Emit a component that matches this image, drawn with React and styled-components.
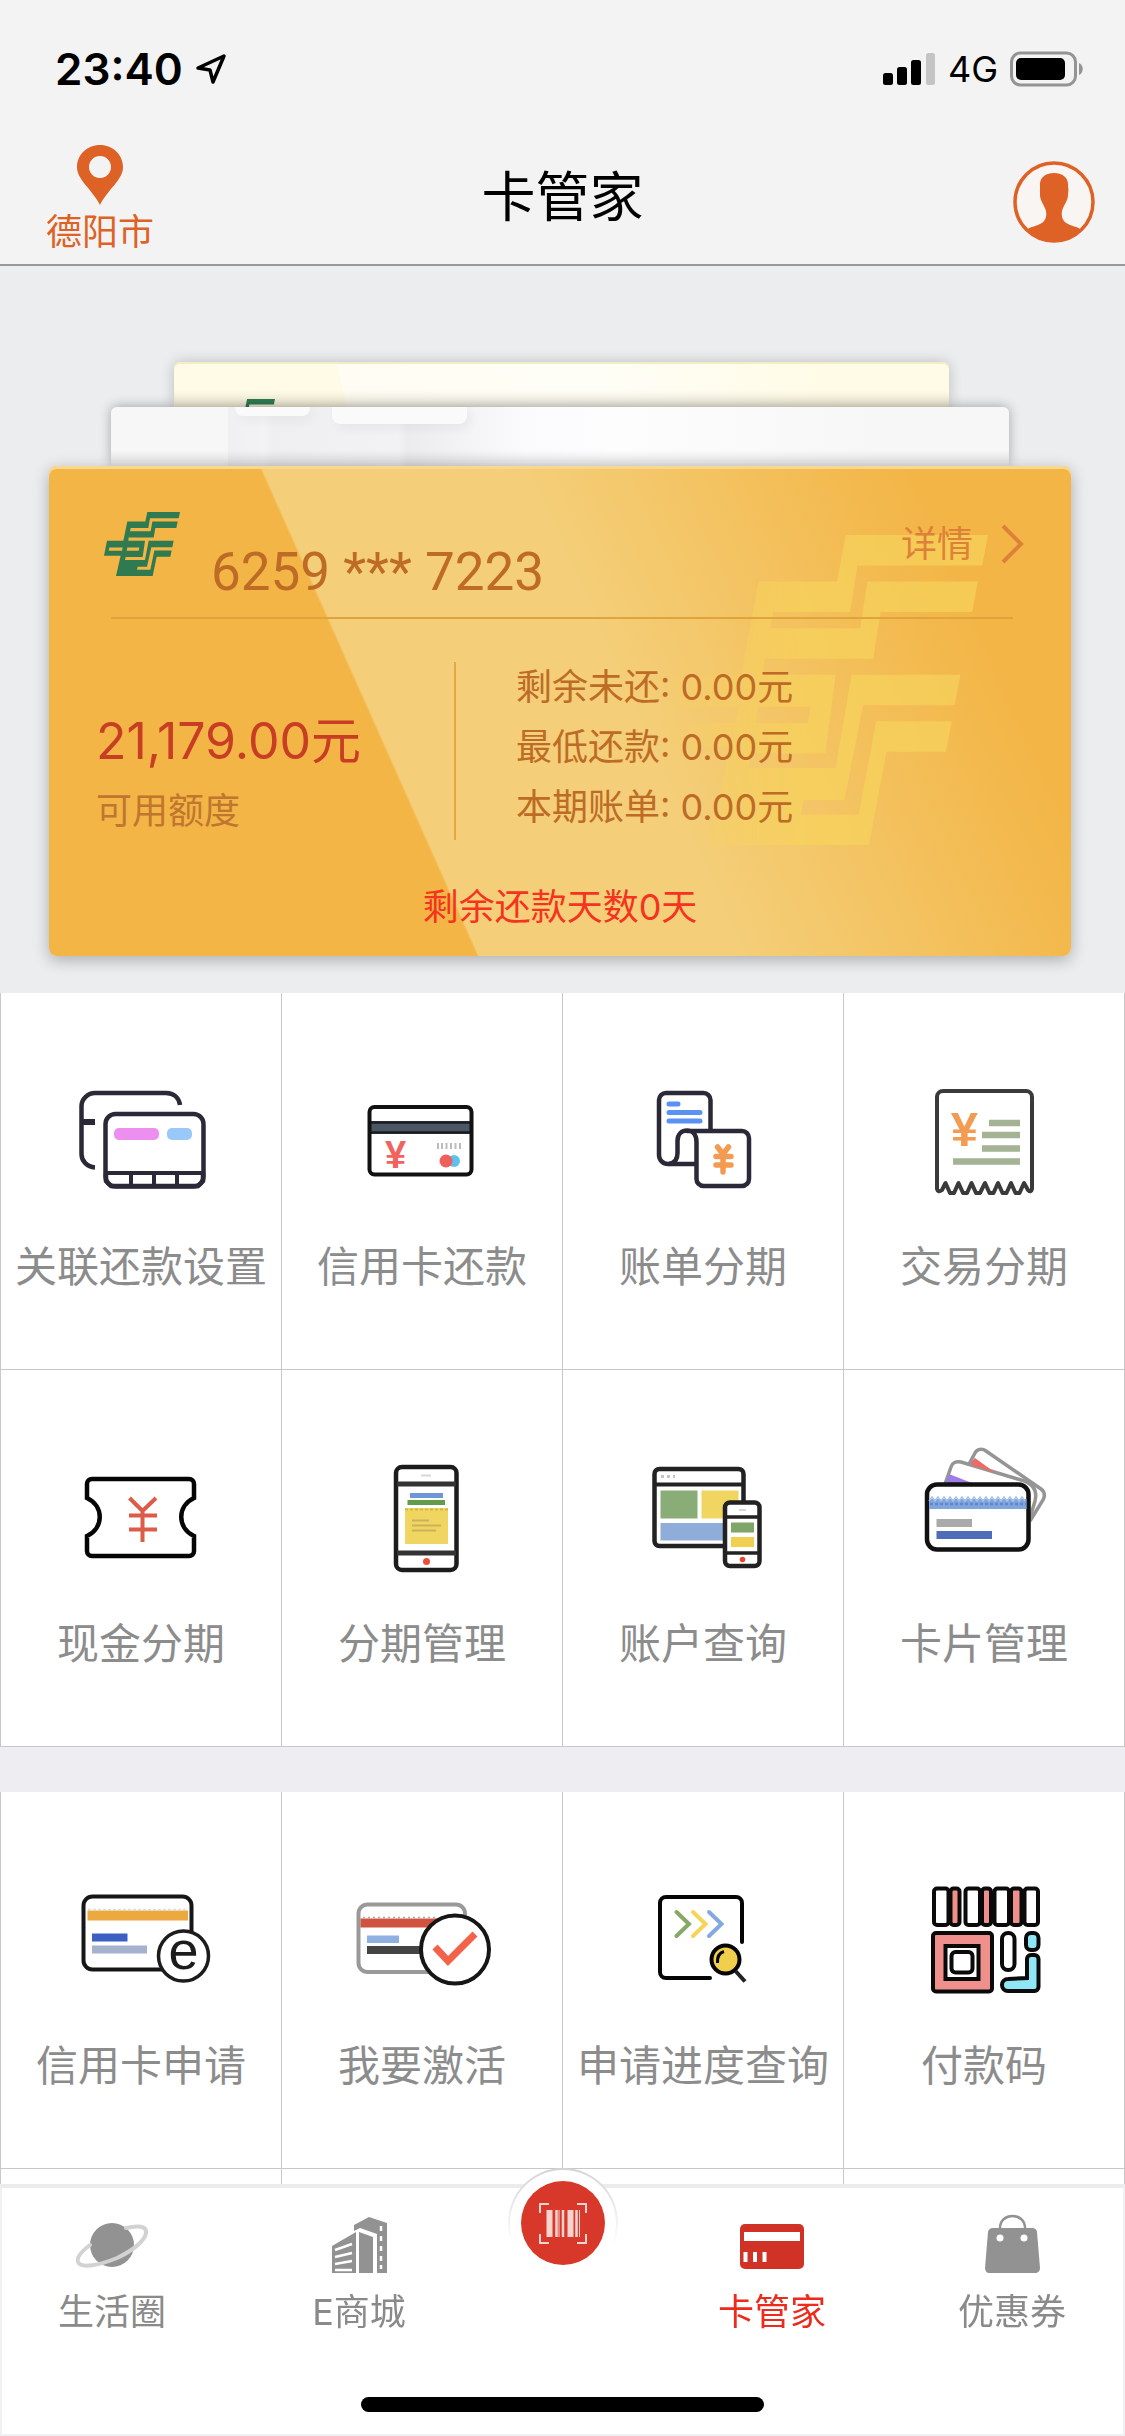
import React from 'react';
import styled, { createGlobalStyle } from 'styled-components';

const GlobalStyle = createGlobalStyle`
    * {
        box-sizing: border-box;
    }

    html, body {
        margin: 0;
        padding: 0;
    }

    body {
        font-family: "Inter", "Noto Sans CJK SC", sans-serif;
        background: #ecedef;
    }

    button {
        font-family: inherit;
        border: none;
        background: none;
        padding: 0;
        margin: 0;
        cursor: pointer;
    }

    svg {
        display: block;
    }
`;

const Screen = styled.div`
    display: flex;
    flex-direction: column;
    height: 100vh;
`;

/* ---------- status bar and header ---------- */

const StatusBar = styled.div`
    display: flex;
    justify-content: space-between;
    align-items: center;
    height: 132px;
    flex-shrink: 0;
    padding: 6px 41px 0 55px;
    background: #f3f3f3;
    color: #000;
`;

const StatusGroup = styled.div`
    display: flex;
    align-items: center;
    gap: 12px;
`;

const Time = styled.span`
    font-size: 44px;
    line-height: 52px;
    font-weight: 600;
`;

const Network = styled.span`
    font-size: 36px;
    line-height: 44px;
`;

const Header = styled.header`
    display: grid;
    grid-template-columns: 1fr auto 1fr;
    align-items: center;
    height: 134px;
    flex-shrink: 0;
    padding: 0 30px;
    background: #f3f3f3;
    border-bottom: 2px solid #989898;
`;

const CityButton = styled.button`
    display: flex;
    flex-direction: column;
    align-items: center;
    justify-self: start;
    gap: 7px;
    margin-left: 16px;
    color: #de6226;
    font-size: 36px;
    line-height: 40px;
`;

const Title = styled.h1`
    margin: 0;
    font-size: 54px;
    line-height: 64px;
    font-weight: 400;
    color: #000;
`;

const UserButton = styled.button`
    justify-self: end;
    margin-top: 8px;
`;

/* ---------- card stack ---------- */

const Main = styled.main`
    flex: 1;
    min-height: 0;
    overflow-y: auto;
    scrollbar-width: none;
`;

const CardStack = styled.section`
    display: flex;
    flex-direction: column;
    padding: 96px 54px 37px 49px;
    background: #ecedef;
`;

const BackCard = styled.div`
    height: 45px;
    margin: 0 122px 0 125px;
    padding: 37px 0 0 36px;
    overflow: hidden;
    border-radius: 6px 6px 0 0;
    background: linear-gradient(to top, rgba(120, 110, 80, 0.14), transparent 18px),
        linear-gradient(77deg, #fffbe6 22%, #fffdf3 22%, #fffef6 55%, #fffbe6 85%);
    box-shadow: 0 0 14px rgba(0, 0, 0, 0.2), inset 0 2px 0 #f3ecc4;
`;

const MiddleCard = styled.div`
    display: flex;
    align-items: flex-start;
    gap: 22px;
    height: 59px;
    margin: 0 62px;
    padding-left: 124px;
    border-radius: 6px 6px 0 0;
    background: linear-gradient(to top, rgba(0, 0, 0, 0.1), transparent 16px),
        linear-gradient(to right, #f7f7f8 13%, #eff0f1 13%, #f3f3f5 17%, #efeff1 18%, #f2f2f4 32%, #ececef 33%, #fbfbfd 46%, #fdfdfe 56%, #f7f7f8 85%);
    box-shadow: 0 -1px 12px rgba(0, 0, 0, 0.3);
`;

const Tab = styled.div`
    width: ${props => props.$width};
    height: ${props => props.$height};
    border-radius: 0 0 8px 8px;
    background: #fafafb;
    box-shadow: 4px 4px 12px rgba(0, 0, 0, 0.05);
`;

const CreditCard = styled.article`
    position: relative;
    min-height: 490px;
    border-radius: 8px;
    background: linear-gradient(66deg, #f3b546 34.5%, #f4ce78 34.7%, #f4ce78 56%, #f3b546 87%);
    box-shadow: 0 4px 16px rgba(0, 0, 0, 0.28), inset 0 3px 0 #f9d78f;
`;

const Watermark = styled.div`
    position: absolute;
    top: 69px;
    right: 83px;
    color: #f7d45c;
    opacity: 0.7;
    mask-image: linear-gradient(to right, transparent, #000 45%);
`;

const CardContent = styled.div`
    position: relative;
`;

const CardTop = styled.div`
    display: flex;
    align-items: flex-start;
    height: 151px;
    padding: 46px 46px 0 55px;
`;

const CardNumber = styled.span`
    margin: 30px 0 0 31px;
    font-family: "Roboto", sans-serif;
    font-size: 53px;
    line-height: 60px;
    color: #be6b26;
`;

const DetailButton = styled.button`
    display: flex;
    align-items: center;
    gap: 28px;
    margin: 12px 0 0 auto;
    font-size: 36px;
    line-height: 40px;
    color: #df8038;
`;

const Rule = styled.hr`
    height: 2px;
    margin: 0 58px 0 62px;
    border: none;
    background: #dfa43c;
`;

const CardBody = styled.div`
    display: flex;
    align-items: flex-start;
    height: 268px;
    color: #be6b26;
`;

const Limit = styled.div`
    display: flex;
    flex-direction: column;
    gap: 20px;
    width: 405px;
    padding: 92px 0 0 47px;
`;

const Amount = styled.strong`
    font-size: 50px;
    line-height: 60px;
    font-weight: 400;
    color: #c83e24;
`;

const LimitLabel = styled.span`
    font-size: 36px;
    line-height: 40px;
    color: #c0762f;
`;

const Divider = styled.div`
    width: 2px;
    height: 178px;
    margin-top: 43px;
    background: #e0a943;
`;

const BillList = styled.ul`
    margin: 38px 0 0 60px;
    padding: 0;
    list-style: none;
    font-size: 36px;
    line-height: 60px;
`;

const DueNotice = styled.p`
    margin: 0;
    font-size: 36px;
    line-height: 40px;
    text-align: center;
    color: #f5331f;
`;

/* ---------- service grid ---------- */

const ServiceSections = styled.div`
    display: flex;
    flex-direction: column;
    gap: 45px;
    background: #ededf2;
`;

const ServiceGrid = styled.section`
    display: grid;
    grid-template-columns: repeat(4, 1fr);
    grid-auto-rows: 377px;
    background: #fff;
    border-left: 1px solid #c8c8c8;
`;

const Tile = styled.button`
    display: flex;
    flex-direction: column;
    align-items: center;
    gap: 35px;
    padding-top: 74px;
    border-right: 1px solid #c8c8c8;
    border-bottom: 1px solid #c8c8c8;
    font-size: 42px;
    line-height: 50px;
    white-space: nowrap;
    color: #8c8c8c;
`;

/* ---------- bottom navigation ---------- */

const BottomNav = styled.nav`
    position: relative;
    flex-shrink: 0;
    background: #fff;
    border: 2px solid #f0f0f3;
    border-top: 4px solid #ebecee;
    padding-bottom: 22px;
`;

const NavItems = styled.div`
    display: grid;
    grid-template-columns: 220fr 274fr 134fr 284fr 196fr;
    align-items: start;
    height: 209px;
    padding-right: 13px;
`;

const NavItem = styled.button`
    display: flex;
    flex-direction: column;
    align-items: center;
    gap: 16px;
    padding-top: 26px;
    font-size: 36px;
    line-height: 44px;
    color: ${props => (props.$active ? '#ee2a1c' : '#8a8a8a')};
`;

const ScanButton = styled.button`
    justify-self: center;
    width: 110px;
    height: 110px;
    margin-top: -20px;
    border-radius: 50%;
    background: linear-gradient(#fff, #fff) padding-box, linear-gradient(#d4d4d6, #fff 70%) border-box;
    border: 2px solid transparent;
`;

const HomeIndicator = styled.div`
    width: 403px;
    height: 15px;
    margin: 0 auto;
    border-radius: 8px;
    background: #000;
`;

/* ---------- drawings ---------- */

const BankLogo = ({ width, height }) => (
    <svg width={width} height={height} viewBox="42 65 228 193" preserveAspectRatio="none" fill="currentColor" fillRule="evenodd">
        <path d="M172 65H270L266 84H180L175 113H122L120 123H182L187 94H263L259 113H196L191 142H116L115 152H165L158 201H107L105 210H165L176 152H251L247 171H184L171 230H143L141 239H181L193 181H245L241 200H200L188 258H78L92 197H42L51 152H100L112 94H166Z M58 172L56 182H96L98 172Z M112 172L110 182H146L148 172Z" />
    </svg>
);

const LogoColor = styled.span`
    color: #2f7a50;
`;

const LocationArrow = () => (
    <svg width="32" height="32" viewBox="0 0 32 32" fill="none" stroke="#000" strokeWidth="3.5" strokeLinejoin="round">
        <path d="M29 3L3 15L15 17L18 29Z" />
    </svg>
);

const Signal = () => (
    <svg width="53" height="34" viewBox="0 0 53 34">
        <rect x="0" y="21" width="10" height="12" rx="2.5" />
        <rect x="14" y="15" width="10" height="18" rx="2.5" />
        <rect x="28" y="8" width="10" height="25" rx="2.5" />
        <rect x="43" y="1" width="9" height="32" rx="2.5" fill="#c4c4c4" />
    </svg>
);

const Battery = () => (
    <svg width="74" height="36" viewBox="0 0 74 36">
        <rect x="1.5" y="2" width="64" height="32" rx="9" fill="none" stroke="#949494" strokeWidth="3" />
        <rect x="6" y="7" width="49" height="22" rx="5" />
        <path d="M69 12c5 2 5 10 0 12z" fill="#949494" />
    </svg>
);

const Pin = () => (
    <svg width="46" height="60" viewBox="0 0 46 60">
        <path d="M23 0C10 0 0 10 0 22C0 35 15 44 23 60C31 44 46 35 46 22C46 10 36 0 23 0ZM23 11A11 11 0 1 1 23 33A11 11 0 1 1 23 11Z" fill="#de6226" fillRule="evenodd" />
    </svg>
);

const User = () => (
    <svg width="82" height="82" viewBox="0 0 82 82">
        <circle cx="41" cy="41" r="39" fill="#f8f5f3" stroke="#de6226" strokeWidth="3.5" />
        <path d="M41 12C32 12 26 17 27 26C27 29 27 31 27 34C27 40 31 43 33 50C34 56 32 61 27 63C21 66 16 66 14 69C21 77 30 81 41 81C52 81 61 77 68 69C66 66 61 66 55 63C50 61 48 56 49 50C51 43 55 40 55 34C55 31 56 29 55 26C56 17 50 12 41 12Z" fill="#de6226" />
    </svg>
);

const Chevron = () => (
    <svg width="24" height="40" viewBox="0 0 24 40" fill="none" stroke="#df8038" strokeWidth="4">
        <path d="M2 2L20 20L2 38" />
    </svg>
);

const Icon = ({ children }) => (
    <svg width="140" height="140" viewBox="0 0 140 140" fill="none">{children}</svg>
);

const LinkedCards = () => (
    <Icon>
        <g stroke="#2b2838" strokeWidth="4.5">
            <path d="M109 38C108 31 103 26 95 26H24C17 26 10.500 32 10.500 39V87C10.500 94 16 100 24 100.500" />
            <path d="M11 55H24" strokeWidth="6" />
            <rect x="34.500" y="47" width="98" height="72.500" rx="10" fill="#fff" />
            <path d="M35 106H132M60 106V119M83 106V119M106 106V119" strokeWidth="4" />
            <path d="M35 106V114L40 119H127L132 114V106" />
        </g>
        <rect x="43" y="61" width="45" height="12" rx="5" fill="#ec8fef" />
        <rect x="96" y="61" width="25" height="12" rx="5" fill="#99c9f8" />
    </Icon>
);

const CreditRepay = () => (
    <Icon>
        <rect x="19" y="54" width="100" height="13" fill="#4b5764" />
        <path d="M19 55.500H119M19 65.500H119" stroke="#1b1d20" strokeWidth="2.500" />
        <rect x="17.500" y="40" width="102" height="67.500" rx="5" stroke="#111" strokeWidth="4" />
        <text x="43.500" y="101" textAnchor="middle" fontFamily="Liberation Sans" fontWeight="700" fontSize="38" fill="#f0635e">¥</text>
        <path d="M86 76V82M90 76V82M94.500 76V82M99 76V82M103.500 76V82M108 76V82" stroke="#bbb" strokeWidth="2" />
        <circle cx="102" cy="94" r="6" fill="#5fc0f0" />
        <circle cx="94" cy="94" r="6.500" fill="#ef605c" />
    </Icon>
);

const BillSplit = () => (
    <Icon>
        <g stroke="#2b2838" strokeWidth="4.500">
            <path d="M77.500 62V33a7 7 0 0 0-7-7H33a7 7 0 0 0-7 7V88a9 9 0 0 0 9 9H62" />
            <path d="M36 97C43 96 44.500 91 44.500 86V74C44.500 67 49 63.500 54 63.500C60 63.500 63.500 68 63.500 75V112a7 7 0 0 0 7 7H109a7 7 0 0 0 7-7V71a7 7 0 0 0-7-7H54" />
        </g>
        <path d="M36 37H45M36 45.500H67M36 54H67" stroke="#5a91f2" strokeWidth="5" strokeLinecap="round" />
        <path d="M84.500 80L90 87L95.500 80M83 89.500H98M83 98H98M90 88V105" stroke="#f39b52" strokeWidth="5.500" strokeLinecap="round" />
    </Icon>
);

const Receipt = () => (
    <Icon>
        <path d="M23 30a6 6 0 0 1 6-6H112a6 6 0 0 1 6 6V122q-1 4-4 1L110 116L105.500 126H101.500L97 116L92.500 126H88.500L84 116L79.500 126H75.500L71 116L66 126H62L57.500 116L53 126H49L44.500 116L40 126H36L31.500 116L28 123q-4 3-5-1Z" stroke="#3a3a3a" strokeWidth="4" strokeLinejoin="round" />
        <text x="50.500" y="79" textAnchor="middle" fontFamily="Liberation Sans" fontWeight="700" fontSize="49" fill="#f39b52">¥</text>
        <path d="M75 56H106M68 68H106M68 81.500H106M39 94.500H106" stroke="#a3b394" strokeWidth="6.500" />
    </Icon>
);

const Ticket = () => (
    <Icon>
        <path d="M21 35H118a5 5 0 0 1 5 5V54C106 62 106 84 123 92V107a5 5 0 0 1-5 5H21a5 5 0 0 1-5-5V92C33 84 33 62 16 54V40a5 5 0 0 1 5-5Z" stroke="#050505" strokeWidth="4.500" />
        <path d="M58.500 54L71.500 67L85 54M58 71.500H86M58 85.500H86M71.500 66V98" stroke="#dd5c47" strokeWidth="4" />
    </Icon>
);

const PhonePlan = () => (
    <Icon>
        <rect x="44" y="23" width="60.500" height="103" rx="6" stroke="#1c1c1c" strokeWidth="4.500" />
        <path d="M45 40H104M45 109H104" stroke="#333" strokeWidth="5" />
        <path d="M69 31.500H79" stroke="#d8d8d8" strokeWidth="2" />
        <rect x="58" y="49" width="33" height="5" fill="#6f97d6" />
        <rect x="55.500" y="56" width="37.500" height="5" fill="#629c4b" />
        <rect x="53" y="64" width="43" height="36" fill="#f0d560" />
        <path d="M53 65.500H96" stroke="#d8b93f" strokeWidth="2" strokeDasharray="3 2" />
        <path d="M60 76.500H77M60 81.500H89M60 86.500H84" stroke="#c9b25a" strokeWidth="2" />
        <circle cx="74.500" cy="117.500" r="3.500" fill="#e8503c" />
    </Icon>
);

const AccountQuery = () => (
    <Icon>
        <rect x="21.500" y="25" width="89" height="77" rx="5" stroke="#222" strokeWidth="4.500" />
        <path d="M22 40.500H110" stroke="#222" strokeWidth="4" />
        <path d="M28 32.500H42" stroke="#c4c4c4" strokeWidth="3" strokeDasharray="3 3" />
        <rect x="27.500" y="46.500" width="37" height="28" fill="#8aac76" />
        <rect x="68.500" y="46.500" width="37" height="28" fill="#f0d560" />
        <rect x="27.500" y="79" width="66" height="17.500" fill="#8fadd9" />
        <rect x="92" y="58.500" width="34.500" height="63.500" rx="5" fill="#fff" stroke="#222" strokeWidth="4.500" />
        <path d="M92 73H126M92 109H126" stroke="#222" strokeWidth="3.500" />
        <path d="M106 66H113" stroke="#d8d8d8" strokeWidth="2" />
        <rect x="98" y="78.500" width="23" height="10" fill="#7fa668" />
        <rect x="98" y="93" width="23" height="10" fill="#f0d050" />
        <circle cx="109.500" cy="115.500" r="2.800" fill="#f0432f" />
    </Icon>
);

const CardManage = () => (
    <Icon>
        <path d="M61 14L84 31L54 21Z" fill="#ec6b66" />
        <path d="M54.500 21L61 9C63 5 68 4 72 7L127 45C131 48 131 52 129 56L116 77" stroke="#959595" strokeWidth="3.500" />
        <path d="M31 40L37 23C38 19 42 17 47 18L107 36C118 39 124 45 121 57L116 74Z" fill="#fff" stroke="#959595" strokeWidth="3.500" />
        <path d="M61 15L82 29L57 21Z" fill="#ec6b66" />
        <path d="M35 30L58 39H32Z" fill="#9d7ee8" />
        <rect x="13" y="40.500" width="101.500" height="65" rx="10" fill="#fff" stroke="#111" strokeWidth="4.500" />
        <rect x="15" y="55" width="97.500" height="10" fill="#7fa5dc" />
        <path d="M15 57l3-4 3 4 3-4 3 4 3-4 3 4 3-4 3 4 3-4 3 4 3-4 3 4 3-4 3 4 3-4 3 4 3-4 3 4 3-4 3 4 3-4 3 4 3-4 3 4 3-4 3 4 3-4 3 4 3-4 3 4 3-4 3 4" stroke="#a9c3ea" strokeWidth="1.500" />
        <path d="M16 60H112" stroke="#5f89cb" strokeWidth="2.500" strokeDasharray="3 2" />
        <rect x="22.500" y="75" width="35.500" height="8" fill="#aaa" />
        <rect x="22.500" y="87" width="55.500" height="8" fill="#4f6cb8" />
    </Icon>
);

const CardApply = () => (
    <Icon>
        <rect x="12.500" y="30.500" width="108" height="73" rx="9" stroke="#161616" strokeWidth="4" />
        <rect x="16.500" y="44.500" width="100.500" height="10" fill="#eba93f" />
        <path d="M17 43.500H117" stroke="#dcdcdc" strokeWidth="1.500" strokeDasharray="3 2" />
        <rect x="21" y="67.500" width="35.500" height="8" fill="#3c5fc4" />
        <rect x="21" y="79.500" width="55" height="8" fill="#a4b1cf" />
        <circle cx="112.500" cy="90" r="25" fill="#fff" stroke="#1c1c1c" strokeWidth="3.500" />
        <text x="112.500" y="103" textAnchor="middle" fontFamily="Liberation Sans" fontSize="54" fill="#1c1c1c">e</text>
    </Icon>
);

const CardActivate = () => (
    <Icon>
        <rect x="6.500" y="38.500" width="106.500" height="67.500" rx="9" stroke="#999" strokeWidth="4" />
        <rect x="8.500" y="52.500" width="80" height="9" fill="#d0533f" />
        <path d="M11 51.500H85" stroke="#aaa" strokeWidth="1.500" strokeDasharray="2 3" />
        <rect x="15" y="69.500" width="32" height="7.500" fill="#8fb0e0" />
        <rect x="15" y="80" width="55" height="8" fill="#444" />
        <circle cx="103" cy="83.500" r="34" fill="#fff" stroke="#161616" strokeWidth="4" />
        <path d="M83 81L96 95L123 68" stroke="#f2634a" strokeWidth="7" />
    </Icon>
);

const Progress = () => (
    <Icon>
        <path d="M109 76V37a6 6 0 0 0-6-6H33a6 6 0 0 0-6 6V106a6 6 0 0 0 6 6H77" stroke="#050505" strokeWidth="4" strokeLinecap="round" />
        <g strokeWidth="4" strokeLinecap="round">
            <path d="M43.500 46L56 58L43.500 70" stroke="#86a968" />
            <path d="M60 46L72.500 58L60 70" stroke="#f4d558" />
            <path d="M76 46L88.500 58L76 70" stroke="#84a9e0" />
        </g>
        <circle cx="92.500" cy="93.500" r="14" fill="#f0cf4c" stroke="#050505" strokeWidth="4" />
        <path d="M102.500 105L112 115.500" stroke="#222" strokeWidth="4" />
        <path d="M84.500 97C84 91 86 87 91 85.500" stroke="#050505" strokeWidth="3" />
    </Icon>
);

const PayCode = () => (
    <Icon>
        <g stroke="#0a0a0a" strokeWidth="4">
            <rect x="20" y="22.500" width="14.500" height="36.500" rx="3" fill="#fff" />
            <rect x="36.500" y="22.500" width="9" height="36.500" rx="3" fill="#f0908c" />
            <rect x="51.500" y="22.500" width="14.500" height="36.500" rx="3" fill="#fff" />
            <rect x="68" y="22.500" width="9" height="36.500" rx="3" fill="#f0908c" />
            <rect x="80.500" y="22.500" width="14.500" height="36.500" rx="3" fill="#fff" />
            <rect x="97" y="22.500" width="10.500" height="36.500" rx="3" fill="#f0908c" />
            <rect x="110.500" y="22.500" width="13.500" height="36.500" rx="3" fill="#fff" />
            <rect x="19" y="67" width="59" height="58.500" rx="3" fill="#f0908c" />
            <rect x="31.500" y="80" width="33" height="33" fill="#fff" />
            <rect x="37.500" y="86" width="21" height="20.500" rx="4" />
            <rect x="88" y="67" width="12.500" height="37" rx="6" fill="#fff" />
            <rect x="112" y="67" width="12.500" height="17" rx="5" fill="#8fe6f7" />
            <path d="M117 89h3.500a4 4 0 0 1 4 4V121a4 4 0 0 1-4 4H94a6 6 0 0 1 0-12L113 112V93a4 4 0 0 1 4-4Z" fill="#8fe6f7" />
        </g>
    </Icon>
);

const NavIcon = ({ children }) => (
    <svg width="72" height="60" viewBox="0 0 72 60" fill="none">{children}</svg>
);

const Planet = () => (
    <NavIcon>
        <circle cx="36" cy="31" r="22" fill="#929292" />
        <path d="M50 14C62 11 71 12 70 19C69 27 56 37 41 44C24 51 5 55 2 48C0 43 6 37 14 31" stroke="#d2d2d2" strokeWidth="4" strokeLinecap="round" />
    </NavIcon>
);

const Mall = () => (
    <NavIcon>
        <path d="M31 11L46 3L64 9V59H54V20L37 14L31 17Z" fill="#929292" />
        <path d="M9 32L33 18V59H9ZM36 18L50 23V59H36Z" fill="#929292" />
        <path d="M12 36L29 30M12 43L29 39M12 50L29 47M12 56H29M58 12V17M58 22V27M58 32V37M58 42V47M58 51V55" stroke="#fff" strokeWidth="2.500" />
    </NavIcon>
);

const CardTab = () => (
    <NavIcon>
        <rect x="4" y="10" width="64" height="45" rx="5" fill="#d03225" />
        <rect x="8" y="18" width="56" height="9" fill="#fff" />
        <path d="M9.500 38V48M19 38V48M28.500 38V48" stroke="#fff" strokeWidth="4" />
    </NavIcon>
);

const Bag = () => (
    <NavIcon>
        <path d="M24 18V14C24 -2 49 -2 49 14V18" stroke="#929292" strokeWidth="2.500" />
        <path d="M17 14H56C59 14 61 16 61 18L64 54C64 57 62 59 59 59H13C11 59 9 57 9 54L12 18C12 16 14 14 17 14Z" fill="#929292" />
        <circle cx="24" cy="24" r="3.500" fill="#fff" />
        <circle cx="48" cy="24" r="3.500" fill="#fff" />
    </NavIcon>
);

const Scan = () => (
    <svg width="106" height="106" viewBox="0 0 106 106" fill="none">
        <circle cx="53" cy="53" r="42" fill="#d73829" />
        <g stroke="#f9d3d0">
            <path d="M30 43V34H39M67 34H76V43M76 64V73H67M39 73H30V64" strokeWidth="2" />
            <path d="M39.500 40V67M60.500 40V67" strokeWidth="6" />
            <path d="M46.500 40V67M53 40V67M66.500 40V67" strokeWidth="2.500" />
            <path d="M49 40V67M69.500 40V67" strokeWidth="1" />
        </g>
    </svg>
);

/* ---------- data ---------- */

const bills = [
    { label: '剩余未还', value: '0.00元' },
    { label: '最低还款', value: '0.00元' },
    { label: '本期账单', value: '0.00元' },
];

const cardServices = [
    { name: '关联还款设置', icon: <LinkedCards /> },
    { name: '信用卡还款', icon: <CreditRepay /> },
    { name: '账单分期', icon: <BillSplit /> },
    { name: '交易分期', icon: <Receipt /> },
    { name: '现金分期', icon: <Ticket /> },
    { name: '分期管理', icon: <PhonePlan /> },
    { name: '账户查询', icon: <AccountQuery /> },
    { name: '卡片管理', icon: <CardManage /> },
];

const applyServices = [
    { name: '信用卡申请', icon: <CardApply /> },
    { name: '我要激活', icon: <CardActivate /> },
    { name: '申请进度查询', icon: <Progress /> },
    { name: '付款码', icon: <PayCode /> },
];

const Services = ({ items, spare = 0 }) => (
    <ServiceGrid>
        {items.map(item => (
            <Tile key={item.name}>
                {item.icon}
                <span>{item.name}</span>
            </Tile>
        ))}
        {Array.from({ length: spare }, (_, i) => <Tile as="div" key={i} />)}
    </ServiceGrid>
);

const App = () => {
    return (
        <Screen>
            <GlobalStyle />
            <StatusBar>
                <StatusGroup>
                    <Time>23:40</Time>
                    <LocationArrow />
                </StatusGroup>
                <StatusGroup>
                    <Signal />
                    <Network>4G</Network>
                    <Battery />
                </StatusGroup>
            </StatusBar>
            <Header>
                <CityButton>
                    <Pin />
                    <span>德阳市</span>
                </CityButton>
                <Title>卡管家</Title>
                <UserButton aria-label="我的">
                    <User />
                </UserButton>
            </Header>
            <Main>
                <CardStack>
                    <BackCard>
                        <LogoColor><BankLogo width="65" height="55" /></LogoColor>
                    </BackCard>
                    <MiddleCard>
                        <Tab $width="75px" $height="9px" />
                        <Tab $width="135px" $height="17px" />
                    </MiddleCard>
                    <CreditCard>
                        <Watermark><BankLogo width="331" height="310" /></Watermark>
                        <CardContent>
                            <CardTop>
                                <LogoColor><BankLogo width="76" height="64" /></LogoColor>
                                <CardNumber>6259 *** 7223</CardNumber>
                                <DetailButton>
                                    详情
                                    <Chevron />
                                </DetailButton>
                            </CardTop>
                            <Rule />
                            <CardBody>
                                <Limit>
                                    <Amount>21,179.00元</Amount>
                                    <LimitLabel>可用额度</LimitLabel>
                                </Limit>
                                <Divider />
                                <BillList>
                                    {bills.map(bill => (
                                        <li key={bill.label}>{bill.label}: {bill.value}</li>
                                    ))}
                                </BillList>
                            </CardBody>
                            <DueNotice>剩余还款天数0天</DueNotice>
                        </CardContent>
                    </CreditCard>
                </CardStack>
                <ServiceSections>
                    <Services items={cardServices} />
                    <Services items={applyServices} spare={4} />
                </ServiceSections>
            </Main>
            <BottomNav>
                <NavItems>
                    <NavItem>
                        <Planet />
                        <span>生活圈</span>
                    </NavItem>
                    <NavItem>
                        <Mall />
                        <span>E商城</span>
                    </NavItem>
                    <ScanButton aria-label="扫码">
                        <Scan />
                    </ScanButton>
                    <NavItem $active>
                        <CardTab />
                        <span>卡管家</span>
                    </NavItem>
                    <NavItem>
                        <Bag />
                        <span>优惠券</span>
                    </NavItem>
                </NavItems>
                <HomeIndicator />
            </BottomNav>
        </Screen>
    );
};

export default App;
